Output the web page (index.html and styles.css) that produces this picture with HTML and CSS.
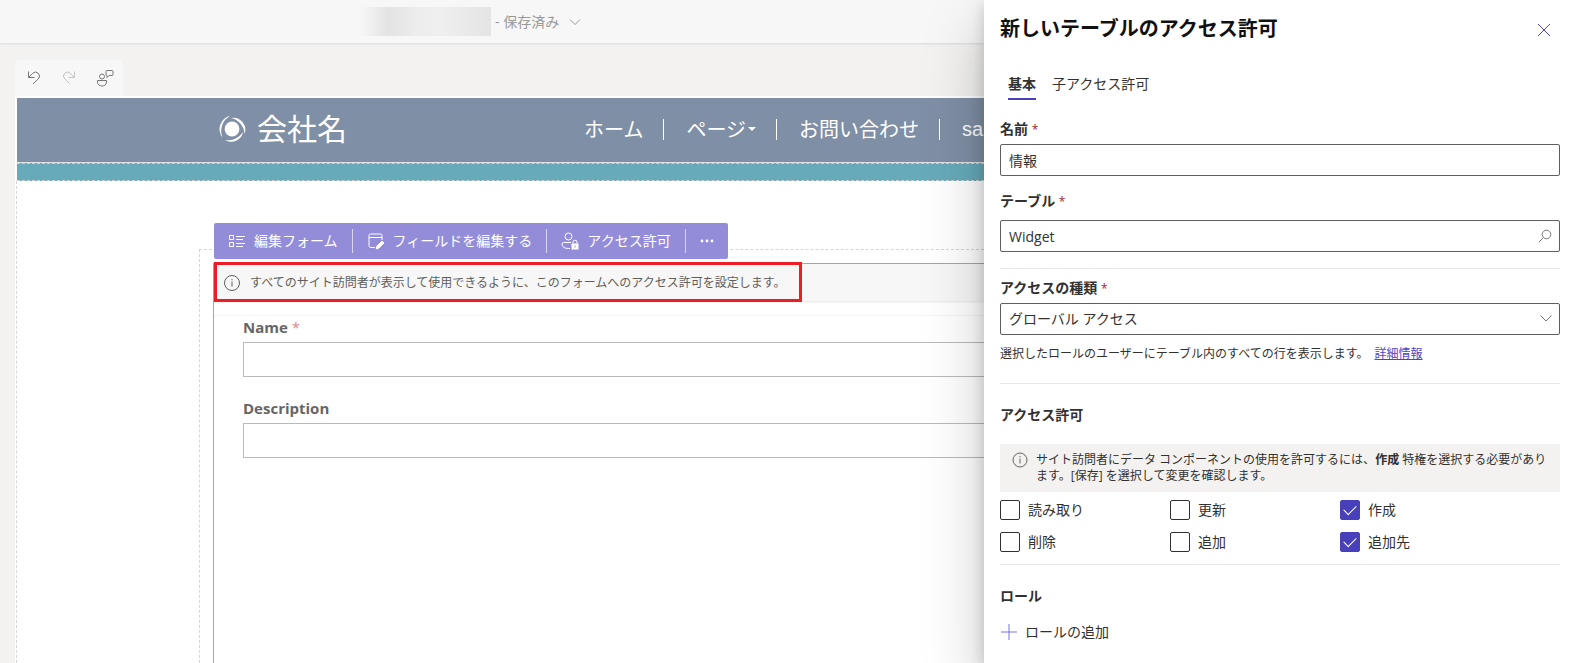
FILE: index.html
```html
<!DOCTYPE html>
<html lang="ja">
<head>
<meta charset="utf-8">
<meta name="viewport" content="width=device-width, initial-scale=1">
<title>新しいテーブルのアクセス許可</title>
<link rel="stylesheet" href="styles.css">
</head>
<body>
<div class="app">
  <div class="workspace">
    <header class="topbar">
      <span class="site-name"></span>
      <button class="save-status" type="button">
        <span>- 保存済み</span>
        <svg width="12" height="12" viewBox="0 0 12 12" fill="none" stroke="currentColor"><path d="M1 3.500l5 5 5-5"/></svg>
      </button>
    </header>

    <div class="tools">
      <button type="button" class="tool" aria-label="元に戻す">
        <svg width="16" height="16" viewBox="0 0 16 16" fill="none" stroke="currentColor"><path d="M2.500 1.500v6h6M2.700 7.300l4-4a4 4 0 0 1 5.600 0a4 4 0 0 1 0 5.600l-5.300 5"/></svg>
      </button>
      <button type="button" class="tool tool-disabled" aria-label="やり直し" disabled>
        <svg width="16" height="16" viewBox="0 0 16 16" fill="none" stroke="currentColor"><path d="M13.500 1.500v6h-6M13.300 7.300l-4-4a4 4 0 0 0-5.600 0a4 4 0 0 0 0 5.600l5.300 5"/></svg>
      </button>
      <button type="button" class="tool" aria-label="コメント">
        <svg width="18" height="18" viewBox="0 0 18 18" fill="none" stroke="currentColor"><circle cx="6" cy="7.500" r="2.500"/><path d="M1.500 11.500h9v1.500c0 2.500-2 4-4.500 4s-4.500-1.500-4.500-4zM10.500 1.500h5.500a1 1 0 0 1 1 1v3a1 1 0 0 1-1 1h-3l-2 2v-2.200a1 1 0 0 1-1-1V2.500a1 1 0 0 1 .5-1z"/></svg>
      </button>
    </div>

    <main class="canvas">
      <div class="site-header">
        <a class="brand" href="#">
          <svg width="28" height="28" viewBox="0 0 28 28" fill="#fff"><circle cx="14" cy="14" r="7.400"/><path d="M12.500 .8A13.500 13.500 0 0 0 4.500 22.500A17 17 0 0 1 12.500 .8z"/><path d="M13 3A12 12 0 0 1 26.500 19A17 17 0 0 0 13 3z"/><path d="M25 17A11.800 11.800 0 0 1 7 25A17.500 17.500 0 0 0 25 17z"/></svg>
          <span>会社名</span>
        </a>
        <nav class="site-nav">
          <a href="#">ホーム</a>
          <a class="has-menu" href="#">ページ<svg width="8" height="4" viewBox="0 0 8 4" fill="#fff"><path d="M0 0h8L4 4z"/></svg></a>
          <a href="#">お問い合わせ</a>
          <a class="latin" href="#">sa</a>
        </nav>
      </div>
      <div class="band"></div>
      <section class="section">
        <div class="column">
          <div class="form-toolbar">
            <button type="button">
              <svg width="18" height="18" viewBox="0 0 18 18" fill="none" stroke="#fff"><path d="M1.500 3.500h4v4h-4zM1.500 10.500h4v4h-4zM8 4.500h9M8 7.500h7M8 11.500h9M8 14.500h7"/></svg>
              <span>編集フォーム</span>
            </button>
            <button type="button">
              <svg width="18" height="18" viewBox="0 0 18 18" fill="none" stroke="#fff"><path d="M8 15.500H4a2 2 0 0 1-2-2V3.500a1.500 1.500 0 0 1 1.500-1.500h10A1.500 1.500 0 0 1 15 3.500V8M2 5.500h13"/><path d="M15 9l2 2-5 5-2.800.9.800-2.900z" fill="#fff"/></svg>
              <span>フィールドを編集する</span>
            </button>
            <button type="button">
              <svg width="18" height="18" viewBox="0 0 18 18" fill="none" stroke="#fff"><circle cx="7.500" cy="4.500" r="3.500"/><path d="M10 10.500H2.500a1.500 1.500 0 0 0-1.500 1.500c0 3 3 4.500 6.500 4.500H9M12 11.500v-1.300a2 2 0 0 1 4 0v1.300"/><path d="M10.500 11.500h7v6h-7z" fill="#fff" stroke="none"/><path d="M14 13.500v2" stroke="#938dd9"/></svg>
              <span>アクセス許可</span>
            </button>
            <button type="button" aria-label="その他">
              <svg width="14" height="4" viewBox="0 0 14 4" fill="#fff"><circle cx="2" cy="2" r="1.400"/><circle cx="7" cy="2" r="1.400"/><circle cx="12" cy="2" r="1.400"/></svg>
            </button>
          </div>
          <form class="form">
            <div class="notice">
              <div class="notice-callout">
                <svg width="18" height="18" viewBox="0 0 18 18" fill="none" stroke="currentColor"><circle cx="9" cy="9" r="7.500"/><path d="M9 7.500v5M9 5v1.300"/></svg>
                <span>すべてのサイト訪問者が表示して使用できるように、このフォームへのアクセス許可を設定します。</span>
              </div>
            </div>
            <div class="form-body">
              <div class="form-field">
                <label for="f-name">Name <span class="req">*</span></label>
                <input id="f-name" type="text">
              </div>
              <div class="form-field">
                <label for="f-desc">Description</label>
                <input id="f-desc" type="text">
              </div>
            </div>
          </form>
        </div>
      </section>
    </main>
  </div>

  <aside class="panel">
    <div class="panel-header">
      <h1>新しいテーブルのアクセス許可</h1>
      <button class="close" type="button" aria-label="閉じる">
        <svg width="14" height="14" viewBox="0 0 14 14" fill="none" stroke="currentColor"><path d="M1 1l12 12M13 1L1 13"/></svg>
      </button>
    </div>
    <div class="tabs">
      <button type="button" class="tab tab-active">基本</button>
      <button type="button" class="tab">子アクセス許可</button>
    </div>
    <div class="field">
      <label for="p-name">名前 <span class="required">*</span></label>
      <input id="p-name" class="control" type="text" value="情報">
    </div>
    <div class="field field-table">
      <label for="p-table">テーブル <span class="required">*</span></label>
      <div class="with-icon">
        <input id="p-table" class="control" type="text" value="Widget">
        <svg width="14" height="14" viewBox="0 0 14 14" fill="none" stroke="currentColor"><circle cx="8.500" cy="5.500" r="4.300"/><path d="M5.400 8.600L.8 13.200"/></svg>
      </div>
    </div>
    <hr>
    <div class="field field-access">
      <label for="p-access">アクセスの種類 <span class="required">*</span></label>
      <div class="with-icon">
        <select id="p-access" class="control"><option>グローバル アクセス</option></select>
        <svg width="12" height="12" viewBox="0 0 12 12" fill="none" stroke="currentColor"><path d="M.5 3.500L6 9l5.500-5.500"/></svg>
      </div>
      <p class="help"><span>選択したロールのユーザーにテーブル内のすべての行を表示します。</span><a href="#">詳細情報</a></p>
    </div>
    <hr>
    <h2>アクセス許可</h2>
    <div class="info">
      <svg width="16" height="16" viewBox="0 0 16 16" fill="none" stroke="currentColor"><circle cx="8" cy="8" r="7"/><path d="M8 6.500v5M8 4v1.300"/></svg>
      <p>サイト訪問者にデータ コンポーネントの使用を許可するには、<b>作成</b> 特権を選択する必要があります。[保存] を選択して変更を確認します。</p>
    </div>
    <div class="checks">
      <label><input type="checkbox">読み取り</label>
      <label><input type="checkbox">更新</label>
      <label><input type="checkbox" checked>作成</label>
      <label><input type="checkbox">削除</label>
      <label><input type="checkbox">追加</label>
      <label><input type="checkbox" checked>追加先</label>
    </div>
    <hr>
    <h2>ロール</h2>
    <button class="add" type="button">
      <svg width="16" height="16" viewBox="0 0 16 16" fill="none" stroke="currentColor"><path d="M8 0v16M0 8h16"/></svg>
      <span>ロールの追加</span>
    </button>
  </aside>
</div>
</body>
</html>
```
FILE: styles.css
```css
* {
  box-sizing: border-box;
}

body {
  margin: 0;
  font: 14px/22px "Open Sans", "Noto Sans CJK JP", sans-serif;
  color: #323130;
}

button,
input,
select {
  font: inherit;
  color: inherit;
}

button {
  display: flex;
  align-items: center;
  margin: 0;
  padding: 0;
  border: 0;
  background: none;
  white-space: nowrap;
}

svg {
  flex: none;
}

.app {
  display: flex;
  min-height: 100vh;
}

/* Workspace */

.workspace {
  display: flex;
  flex: 1;
  flex-direction: column;
  min-width: 0;
  overflow: hidden;
  background: #f3f2f1;
}

.topbar {
  display: flex;
  align-items: center;
  gap: 4px;
  height: 43px;
  padding-left: 360px;
  background: #f7f7f7;
  box-shadow: 0 1px 2px rgba(0, 0, 0, 0.1);
}

.site-name {
  width: 131px;
  height: 29px;
  background: linear-gradient(90deg, #f7f7f7 0, #e3e3e3 28px, #ececec 56px, #efefef 80px, #e4e4e4 131px);
}

.save-status {
  gap: 10px;
  color: #999;
}

.tools {
  display: flex;
  align-items: center;
  align-self: flex-start;
  gap: 19px;
  height: 36px;
  margin: 17px 0 0 15px;
  padding: 0 9px 0 11px;
  border-radius: 4px 4px 0 0;
  background: #f7f7f7;
}

.tool {
  color: #777;
}

.tool-disabled {
  color: #c4c4c4;
}

.canvas {
  display: flex;
  flex: 1;
  flex-direction: column;
  margin-left: 15px;
  padding: 2px 0 0 1px;
  background: #fff;
}

.site-header {
  display: flex;
  align-items: center;
  height: 65px;
  margin-left: 1px;
  padding: 0 0 2px 201px;
  border-bottom: 1px solid #e3e3e3;
  background: #7f8fa5;
  white-space: nowrap;
}

.site-header a {
  color: #fff;
  text-decoration: none;
}

.brand {
  display: flex;
  flex: none;
  align-items: center;
  gap: 11px;
  width: 344px;
  font-size: 30px;
  line-height: 40px;
}

.site-nav {
  display: flex;
  flex: none;
  align-items: center;
  font-size: 20px;
  line-height: 21px;
}

.site-nav a {
  padding: 0 20px 0 22px;
}

.site-nav a + a {
  border-left: 1px solid #fff;
}

.site-nav .has-menu {
  display: flex;
  align-items: center;
  gap: 2px;
}

.site-nav .latin {
  padding-right: 0;
  font-family: "Liberation Sans", sans-serif;
}

.band {
  height: 18px;
  margin-left: 1px;
  border: dashed #d0d0d0;
  border-width: 1px 0;
  background: #67aaba;
}

.section {
  display: flex;
  flex: 1;
  padding: 68px 0 0 182px;
  border-left: 1px dashed #d6d6d6;
}

.column {
  position: relative;
  display: flex;
  flex: 1;
  min-width: 0;
  padding: 13px 0 0 13px;
  border: dashed #d6d6d6;
  border-width: 1px 0 0 1px;
}

.form-toolbar {
  position: absolute;
  top: -27px;
  left: 14px;
  display: flex;
  align-items: center;
  height: 36px;
  border-radius: 2px;
  background: #938dd9;
  box-shadow: 0 0 0 2px #fff;
  color: #fff;
}

.form-toolbar button {
  gap: 8px;
  height: 24px;
  padding: 0 14px;
}

.form-toolbar button + button {
  border-left: 1px solid #d8d5f2;
}

.form {
  flex: 1;
  min-width: 0;
  border: solid #a39dde;
  border-width: 1px 0 0 1px;
}

.notice {
  display: flex;
  height: 37px;
  background: #f7f7f7;
  box-shadow: 0 1px 2px rgba(0, 0, 0, 0.1);
}

.notice-callout {
  position: relative;
  display: flex;
  align-items: center;
  gap: 9px;
  padding: 0 12px 0 9px;
  font-size: 12px;
  white-space: nowrap;
  color: #605e5c;
}

.notice-callout::after {
  position: absolute;
  inset: -2px -4px -1px 0;
  border: 3px solid #ee1c25;
  content: "";
}

.form-body {
  display: grid;
  gap: 20px;
  margin-top: 14px;
  padding-left: 29px;
  border-top: 1px solid #f4f4f4;
}

.form-field label {
  display: block;
  height: 26px;
  font-size: 15px;
  font-weight: 700;
  line-height: 22px;
  color: #666;
}

.form-field .req {
  font-weight: 400;
  color: #d98a8e;
}

.form-field input {
  display: block;
  width: 100%;
  height: 35px;
  border: solid #bababa;
  border-width: 1px 0 1px 1px;
  background: #fff;
}

/* Side panel */

.panel {
  z-index: 1;
  flex: 0 0 592px;
  padding: 14px 16px;
  background: #fff;
  box-shadow: 0 26px 58px rgba(0, 0, 0, 0.22), 0 5px 14px rgba(0, 0, 0, 0.18);
}

.panel-header {
  display: flex;
  justify-content: space-between;
  padding-right: 9px;
}

.close {
  height: 32px;
  color: #4b45c6;
}

h1 {
  margin: 0;
  font-size: 20px;
  font-weight: 700;
  line-height: 30px;
  color: #111;
}

h2 {
  margin: 20px 0 0;
  font-size: 14px;
  font-weight: 700;
  line-height: 22px;
}

hr {
  height: 1px;
  margin: 0;
  border: 0;
  background: #e8e8e8;
}

.tabs {
  display: flex;
  gap: 16px;
  margin: 24px 8px 18px;
}

.tab {
  height: 30px;
  border-bottom: 2px solid transparent;
}

.tab-active {
  border-color: #4840bb;
  font-weight: 700;
}

.field {
  display: grid;
  gap: 4px;
}

.field label {
  font-weight: 700;
}

.required {
  font-size: 12px;
  font-weight: 400;
  line-height: 12px;
  color: #a4262c;
}

.field-table {
  gap: 8px;
  margin: 14px 0 16px;
}

.field-access {
  margin: 8px 0 19px;
}

.control {
  width: 100%;
  height: 32px;
  padding: 0 8px;
  border: 1px solid #605e5c;
  border-radius: 2px;
  background: #fff;
  appearance: none;
}

.with-icon {
  position: relative;
}

.with-icon svg {
  position: absolute;
  top: 9px;
  right: 8px;
  color: #777;
  pointer-events: none;
}

.help {
  display: flex;
  gap: 6px;
  margin: 5px 0 0;
  font-size: 12px;
  line-height: 20px;
}

.help a {
  color: #4b45c6;
}

.info {
  display: flex;
  gap: 8px;
  margin: 18px 0 8px;
  padding: 8px 12px;
  background: #f3f2f1;
  font-size: 12px;
  line-height: 16px;
}

.info svg {
  color: #666;
}

.info p {
  margin: 0;
}

.checks {
  display: grid;
  grid-template-columns: 170px 170px 1fr;
  gap: 12px 0;
  margin-bottom: 12px;
}

.checks label {
  display: flex;
  align-items: center;
  gap: 8px;
  height: 20px;
}

.checks input {
  display: grid;
  place-items: center;
  width: 20px;
  height: 20px;
  margin: 0;
  border: 1px solid #323130;
  border-radius: 2px;
  appearance: none;
}

.checks input:checked {
  border-color: #4840bb;
  background: #4840bb;
}

.checks input:checked::after {
  width: 11px;
  height: 6px;
  border: solid #fff;
  border-width: 0 0 1px 1px;
  transform: translateY(-2px) rotate(-45deg);
  content: "";
}

.add {
  gap: 8px;
  margin: 14px 0 0 1px;
}

.add svg {
  color: #7a75cf;
}
```
